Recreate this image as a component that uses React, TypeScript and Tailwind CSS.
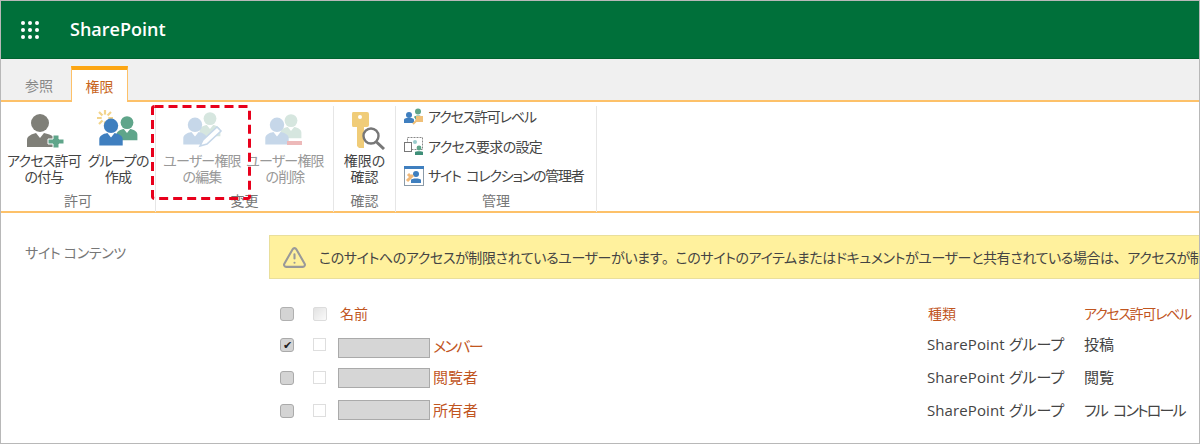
import React from "react";
import { TriangleAlert } from "lucide-react";

const font = "font-['Open_Sans','Noto_Sans_CJK_JP',sans-serif] [font-feature-settings:'palt']";

// Person silhouette used by all the ribbon icons
function Person({ x, y, s = 1, fill }: { x: number; y: number; s?: number; fill: string }) {
  return (
    <g transform={`translate(${x} ${y}) scale(${s})`} fill={fill}>
      <circle cx="0" cy="-8" r="8" />
      <path d="M-13 14 V7 C-13 3 -9 1 -4 0 L0 5 L4 0 C9 1 13 3 13 7 V14 Z" />
    </g>
  );
}

function AddUserIcon() {
  return (
    <svg width="44" height="40" viewBox="0 0 44 40">
      <circle cx="18" cy="13" r="9" fill="#7f7f78" />
      <path d="M5 37 V30 C5 26 10 24 14 23 L18 28 L22 23 C27 24 32 26 33 29 V37 Z" fill="#7f7f78" />
      <path d="M31 28 H37 V32 H42 V37 H37 V41 H31 V37 H26 V32 H31 Z" fill="#5fa58a" stroke="#fff" strokeWidth="1" transform="translate(0 -3)" />
    </svg>
  );
}

function GroupIcon() {
  return (
    <svg width="44" height="40" viewBox="0 0 44 40">
      <g stroke="#f2d48c" strokeWidth="2.2">
        <path d="M9 0 V16 M1 8 H17 M3 2 L15 14 M15 2 L3 14" />
      </g>
      <circle cx="9" cy="8" r="3.4" fill="#fff" />
      <Person x={31} y={19} s={0.8} fill="#5fa58a" />
      <Person x={15} y={23} s={0.9} fill="#3f7fbf" />
    </svg>
  );
}

function EditUserIcon() {
  return (
    <svg width="44" height="40" viewBox="0 0 44 40">
      <Person x={30} y={15} s={0.8} fill="#d6e6df" />
      <Person x={15} y={22} s={0.9} fill="#c6d7e9" />
      <path d="M20 36 L23 30 L37 17 L41 21 L27 34 Z" fill="#fff" stroke="#c6d7e9" strokeWidth="1.6" />
    </svg>
  );
}

function DeleteUserIcon() {
  return (
    <svg width="44" height="40" viewBox="0 0 44 40">
      <Person x={28} y={17} s={0.8} fill="#d6e6df" />
      <Person x={14} y={22} s={0.9} fill="#c6d7e9" />
      <rect x="24" y="31" width="15" height="4" fill="#edb9b9" />
    </svg>
  );
}

function KeyIcon() {
  return (
    <svg width="40" height="40" viewBox="-4 0 40 40">
      <path d="M4 2 H18 Q20 2 20 4 V15 Q20 17 18 17 H15 V38 H10 L8 36 V17 H4 Q3 17 3 15 V4 Q3 2 4 2 Z" fill="#f0cc78" />
      <circle cx="11" cy="7" r="2" fill="#fff" />
      <circle cx="22" cy="26" r="7.5" fill="#fff" fillOpacity="0.7" stroke="#777" strokeWidth="2.4" />
      <path d="M27.5 32 L35 39" stroke="#777" strokeWidth="3" />
    </svg>
  );
}

function LevelIcon() {
  return (
    <svg width="20" height="18" viewBox="0 0 20 18">
      <circle cx="5" cy="7" r="3" fill="#3f7fbf" />
      <path d="M0 15 V12 C0 10 3 10 5 10 C7 10 10 10 10 12 V15 Z" fill="#3f7fbf" />
      <circle cx="14" cy="3.5" r="3" fill="#5fa58a" />
      <path d="M10 9 C11 7 17 7 19 9 V12 H12 Z" fill="#5fa58a" />
      <path d="M9 16 L14 11 M13 9 H18 V13 H13 Z" stroke="#f0c078" strokeWidth="2" fill="#f0c078" />
    </svg>
  );
}

function RequestIcon() {
  return (
    <svg width="20" height="20" viewBox="0 0 20 20">
      <rect x="3.5" y="1.5" width="15" height="12" fill="#fff" stroke="#888" strokeDasharray="2 1" />
      <rect x="0.5" y="6.5" width="7" height="9" fill="#fff" stroke="#777" />
      <circle cx="11" cy="6" r="2" fill="#9cc" />
      <circle cx="15" cy="12" r="2.4" fill="#5fa58a" />
      <path d="M11 19 V16 C11 15 19 15 19 16 V19 Z" fill="#3f8f78" />
    </svg>
  );
}

function AdminIcon() {
  return (
    <svg width="20" height="20" viewBox="0 0 20 20">
      <rect x="0.5" y="0.5" width="19" height="19" fill="#fff" stroke="#8a9aa8" />
      <rect x="0" y="0" width="20" height="3" fill="#3f7fbf" />
      <circle cx="12" cy="8" r="3" fill="#3f7fbf" />
      <path d="M7 17 V14 C7 12 17 12 17 14 V17 Z" fill="#3f7fbf" />
      <path d="M3 15 L9 9 M4 8 L8 12" stroke="#f0b878" strokeWidth="3" />
    </svg>
  );
}

const bigClass = "flex flex-col items-center text-center text-[14px] leading-[16px] shrink-0";

function BigButton({ icon, lines, width, tight, disabled }: { icon: React.ReactNode; lines: string[]; width: string; tight?: boolean; disabled?: boolean }) {
  return (
    <div className={`${bigClass} ${width} ${disabled ? "text-[#999]" : "text-[#444]"} ${tight ? "tracking-[-0.8px]" : ""}`}>
      <div className="h-[47px] flex items-center justify-center">{icon}</div>
      {lines.map((l) => (
        <div key={l} className="whitespace-nowrap">{l}</div>
      ))}
    </div>
  );
}

function Group({ label, width, inner, children }: { label: string; width: string; inner: string; children: React.ReactNode }) {
  return (
    <div className={`${width} h-[106px] mt-1 border-r border-[#e6e6e6] flex flex-col`}>
      <div className={`flex-1 flex ${inner}`}>{children}</div>
      <div className="text-center text-[14px] leading-[18px] text-[#777] pb-[2px]">{label}</div>
    </div>
  );
}

function SmallRow({ icon, text, tracking }: { icon: React.ReactNode; text: string; tracking: string }) {
  return (
    <div className={`h-[29.5px] flex items-center gap-[4px] text-[14px] text-[#444] whitespace-nowrap ${tracking}`}>
      <div className="w-5 flex justify-center">{icon}</div>
      <span>{text}</span>
    </div>
  );
}

const rows = [
  { suffix: "メンバー", suffixClass: "tracking-[-1.6px] translate-y-[2px]", level: "投稿", levelClass: "", rect: "translate-y-[3px]", checked: true },
  { suffix: "閲覧者", suffixClass: "", level: "閲覧", levelClass: "", rect: "", checked: false },
  { suffix: "所有者", suffixClass: "", level: "フル コントロール", levelClass: "tracking-[-1.8px] [word-spacing:4px]", rect: "-translate-y-[1px]", checked: false },
];

export default function App() {
  return (
    <div className={`${font} w-[1200px] h-[444px] overflow-hidden bg-white border border-[#b8b8b8] flex flex-col relative`}>
      {/* Suite bar */}
      <div className="h-[58px] shrink-0 bg-[#00703a] flex items-center pl-[20px] border-b border-[#00622f]">
        <div className="grid grid-cols-3 gap-[3px] w-[18px]">
          {Array.from({ length: 9 }).map((_, i) => (
            <div key={i} className="w-1 h-1 rounded-full bg-white" />
          ))}
        </div>
        <div className="ml-[31px] text-white text-[18px] font-semibold">SharePoint</div>
      </div>

      {/* Tabs */}
      <div className="h-[43px] shrink-0 bg-[#f0f0f0] border-b-2 border-[#fdc169] flex items-end pl-[24px] relative">
        <div className="w-[46px] h-[30px] flex items-center text-[14px] text-[#888]">参照</div>
        <div className="w-[57px] h-[36px] -mb-[2px] bg-white border-x border-[#fdc169] border-t-[4px] border-t-[#fca614] flex items-center justify-center text-[14px] text-[#c8641c]">
          権限
        </div>
      </div>

      {/* Ribbon */}
      <div className="h-[111px] shrink-0 border-b-2 border-[#fdc169] flex">
        <Group label="許可" width="w-[155px]" inner="pl-[6px]">
          <BigButton icon={<AddUserIcon />} lines={["アクセス許可", "の付与"]} width="w-[74px]" tight />
          <BigButton icon={<GroupIcon />} lines={["グループの", "作成"]} width="w-[74px]" tight />
        </Group>
        <Group label="変更" width="w-[178px]" inner="pl-[4px]">
          <BigButton icon={<EditUserIcon />} lines={["ユーザー権限", "の編集"]} width="w-[84px]" tight disabled />
          <BigButton icon={<DeleteUserIcon />} lines={["ユーザー権限", "の削除"]} width="w-[82px]" tight disabled />
        </Group>
        <Group label="確認" width="w-[62px]" inner="justify-center">
          <BigButton icon={<KeyIcon />} lines={["権限の", "確認"]} width="w-[60px]" />
        </Group>
        <Group label="管理" width="w-[201px]" inner="">
          <div className="flex flex-col w-full pl-[8px] -mt-1">
            <SmallRow icon={<LevelIcon />} text="アクセス許可レベル" tracking="tracking-[-1.2px]" />
            <SmallRow icon={<RequestIcon />} text="アクセス要求の設定" tracking="tracking-[-0.7px]" />
            <SmallRow icon={<AdminIcon />} text="サイト コレクションの管理者" tracking="tracking-[-1.2px] [word-spacing:3px]" />
          </div>
        </Group>
      </div>

      {/* Dashed highlight drawn over the ribbon */}
      <svg className="absolute left-[150px] top-[104px]" width="100" height="95" viewBox="0 0 100 95">
        <rect x="1.5" y="1.5" width="97" height="92" rx="2" fill="none" stroke="#e8001c" strokeWidth="3" strokeDasharray="9 5" />
      </svg>

      {/* Body */}
      <div className="flex-1 flex min-h-0">
        <div className="w-[268px] shrink-0 pl-[24px] pt-[29px] text-[14px] tracking-[-0.3px] text-[#777]">サイト コンテンツ</div>
        <div className="flex-1 min-w-0 pt-[22px]">
          <div className="h-[44px] bg-[#fff19d] border-y border-l border-[#e9df9c] flex items-center pl-[12px] whitespace-nowrap overflow-hidden text-[14px] text-[#444]">
            <TriangleAlert size={25} className="text-[#999] shrink-0" />
            <span className="ml-[12px] tracking-[-0.4px]">
              このサイトへのアクセスが制限されているユーザーがいます<span className="[font-feature-settings:normal]">。</span>このサイトのアイテムまたはドキュメントがユーザーと共有されている場合は<span className="[font-feature-settings:normal]">、</span>アクセスが制
            </span>
          </div>

          <div className="mt-[20px] h-[29px] flex items-center pl-[11px] text-[14px] text-[#c1561f]">
            <div className="w-[33px] shrink-0">
              <div className="w-[14px] h-[14px] rounded-[3px] border border-[#b0b0b0] bg-[#d4d4d4]" />
            </div>
            <div className="w-[25px] shrink-0">
              <div className="w-[14px] h-[14px] rounded-[2px] border border-[#dcdcdc] bg-gradient-to-br from-[#e2e2e2] to-[#fafafa]" />
            </div>
            <div className="w-[589px] shrink-0 pl-[2px]">名前</div>
            <div className="w-[157px] shrink-0 pl-[1px]">種類</div>
            <div className="whitespace-nowrap shrink-0 tracking-[-1.3px]">アクセス許可レベル</div>
          </div>

          {rows.map((r) => (
            <div key={r.suffix} className="h-[33px] flex items-center pl-[11px] text-[15px] text-[#444]">
              <div className="w-[33px] shrink-0">
                <div className="w-[14px] h-[14px] rounded-[3px] border border-[#aaa] bg-[#d4d4d4] flex items-center justify-center text-[11px] leading-none text-[#222]">
                  {r.checked ? "✔" : ""}
                </div>
              </div>
              <div className="w-[25px] shrink-0">
                <div className="w-[13px] h-[13px] border border-[#dedede] bg-white" />
              </div>
              <div className="w-[589px] shrink-0 flex items-center">
                <div className={`w-[92px] h-[20px] bg-[#d6d6d6] border border-[#aaa] ${r.rect}`} />
                <span className={`ml-[3px] text-[#c1561f] ${r.suffixClass}`}>{r.suffix}</span>
              </div>
              <div className="w-[157px] shrink-0 tracking-[0.1px]">SharePoint グループ</div>
              <div className={`whitespace-nowrap shrink-0 ${r.levelClass}`}>{r.level}</div>
            </div>
          ))}
        </div>
      </div>
    </div>
  );
}
